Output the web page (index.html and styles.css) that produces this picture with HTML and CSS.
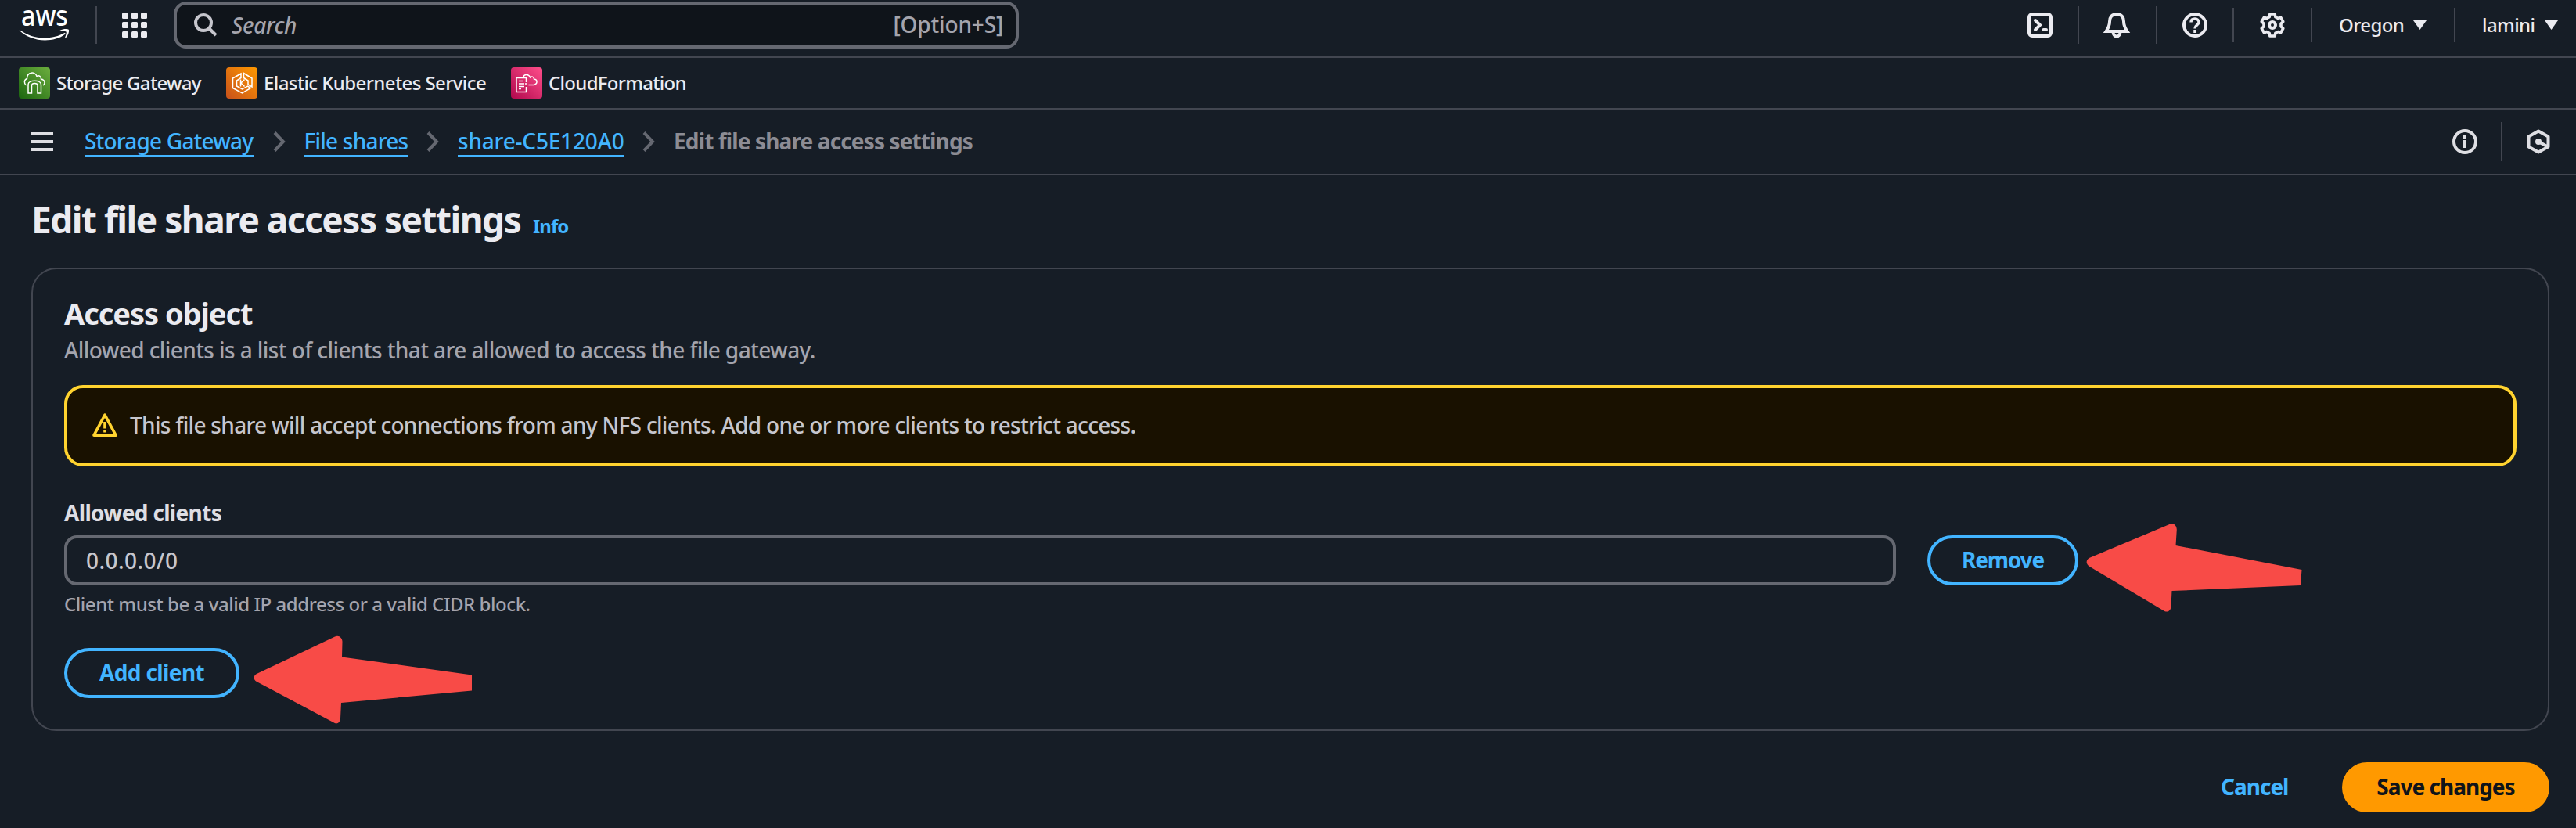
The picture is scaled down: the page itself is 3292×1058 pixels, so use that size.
FILE: index.html
```html
<!DOCTYPE html>
<html lang="en">
<head>
<meta charset="utf-8">
<title>Edit file share access settings</title>
<link rel="stylesheet" href="styles.css">
</head>
<body>
<header class="topbar">
  <svg class="logo" viewBox="0 0 64 44" aria-label="aws">
    <text class="logo-text" x="2" y="23" textLength="60" lengthAdjust="spacingAndGlyphs">aws</text>
    <path d="M0.6 28.4C10 35 20 38.4 31 38.4C41 38.4 50.500 36 57 32.200C58.200 31.600 59.200 33 58.200 33.800C51.500 39 42 41.500 32.500 41.500C20 41.500 8.500 37 0.100 29.300C-.5 28.700.1 28.100.6 28.400Z"/>
    <path d="M51.800 28.800C55 26.800 61.500 26.500 62.700 27.800C64 29.300 62 35.800 58.800 38.600C58.300 39 57.800 38.800 58 38.200C59 35.600 60.300 31.600 59.500 30.500C58.700 29.500 54.800 29.700 52.300 29.900C51.600 30 51.300 29.200 51.800 28.800Z"/>
  </svg>
  <span class="divider logo-divider"></span>
  <svg class="apps" viewBox="0 0 32 32">
    <rect width="8" height="8" rx="1.500"/><rect x="12" width="8" height="8" rx="1.500"/><rect x="24" width="8" height="8" rx="1.500"/>
    <rect y="12" width="8" height="8" rx="1.500"/><rect x="12" y="12" width="8" height="8" rx="1.500"/><rect x="24" y="12" width="8" height="8" rx="1.500"/>
    <rect y="24" width="8" height="8" rx="1.500"/><rect x="12" y="24" width="8" height="8" rx="1.500"/><rect x="24" y="24" width="8" height="8" rx="1.500"/>
  </svg>
  <div class="search">
    <svg class="search-icon" viewBox="0 0 30 30"><circle cx="12" cy="12" r="10"/><path d="M19 19L28 28"/></svg>
    <span class="search-placeholder">Search</span>
    <span class="shortcut">[Option+S]</span>
  </div>
  <nav class="tools">
    <div class="tool tool-shell"><svg class="icon" viewBox="0 0 32 32"><rect x="2" y="2" width="28" height="28" rx="4"/><path stroke-linecap="round" d="M10 10L16 16L10 22M20.500 22H24"/></svg></div>
    <div class="tool tool-bell"><svg class="icon" viewBox="0 0 32 32"><path d="M16 2C9.500 2 7 6.500 7 11.500C7 17.500 4.500 21 2.500 24H29.500C27.500 21 25 17.500 25 11.500C25 6.500 22.500 2 16 2ZM11.500 24.500C11.500 32.500 20.500 32.500 20.500 24.500"/></svg></div>
    <div class="tool tool-help"><svg class="icon" viewBox="0 0 32 32"><circle cx="16" cy="16" r="14"/><path d="M11 12.500C11 9.500 13 8 16 8C19 8 21 9.800 21 12.300C21 16 16 16 16 20.500M16 22V26"/></svg></div>
    <div class="tool"><svg class="icon" viewBox="0 0 32 32"><path stroke-width="3.600" stroke-linejoin="round" d="M12.800 2H19.200L19.800 5.700L23.200 7.500L26.600 6.200L29.800 11.700L27 14.200V17.800L29.800 20.300L26.600 25.800L23.200 24.500L19.800 26.300L19.200 30H12.800L12.200 26.300L8.800 24.500L5.400 25.800L2.200 20.300L5 17.800V14.200L2.200 11.700L5.400 6.200L8.800 7.500L12.200 5.700Z"/><circle cx="16" cy="16" r="4"/></svg></div>
    <div class="tool tool-menu region"><span class="region-name">Oregon</span><svg class="caret" viewBox="0 0 17 12"><path d="M0 0H17L8.500 12Z"/></svg></div>
    <div class="tool tool-menu account"><span class="account-name">lamini</span><svg class="caret" viewBox="0 0 17 12"><path d="M0 0H17L8.500 12Z"/></svg></div>
  </nav>
</header>

<nav class="favorites">
  <a class="favorite fav-storage">
    <svg class="service" viewBox="0 0 40 40">
      <defs><linearGradient id="green" x1="0" y1="1" x2="1" y2="0"><stop offset="0" stop-color="#1b660f"/><stop offset="1" stop-color="#6cae3e"/></linearGradient></defs>
      <rect width="40" height="40" rx="4" fill="url(#green)"/>
      <path d="M9.500 23C6.500 20.500 6.500 16 10.500 14.500C10.500 5.500 21 5 23 11.500C26 9.500 28.500 12 28.500 15C33.500 16 34.500 20.500 31 23M12 33V22C12 15.500 28.500 15.500 28.500 22V33H24V23C24 19.500 16.500 19.500 16.500 23V33Z"/>
    </svg>
    <span>Storage Gateway</span>
  </a>
  <a class="favorite fav-eks">
    <svg class="service" viewBox="0 0 40 40">
      <defs><linearGradient id="orange" x1="0" y1="1" x2="1" y2="0"><stop offset="0" stop-color="#c8511b"/><stop offset="1" stop-color="#f90"/></linearGradient></defs>
      <rect width="40" height="40" rx="4" fill="url(#orange)"/>
      <path d="M19 8L8.500 14V26.500L20.500 33L31.500 26.500L27.500 24L20.500 28L13.500 24V17L19 13.500ZM22.500 7.500L33 14V25L28 22V17L22.500 13.500Z"/>
      <path d="M18.500 15.500V24.500M23.500 15.500L19 20L23.500 24.500"/>
    </svg>
    <span>Elastic Kubernetes Service</span>
  </a>
  <a class="favorite fav-cfn">
    <svg class="service" viewBox="0 0 40 40">
      <defs><linearGradient id="pink" x1="0" y1="1" x2="1" y2="0"><stop offset="0" stop-color="#b0084d"/><stop offset="1" stop-color="#ff4f8b"/></linearGradient></defs>
      <rect width="40" height="40" rx="4" fill="url(#pink)"/>
      <path d="M19.500 19V13.500H7V31.500H19.500V25M10 17.500H15M10 21H17M10 24.500H17M18 21H21M10 27.500H13M22.500 22.500H29C34.500 21 34 15.500 29.500 15C29 11.500 26.500 11.500 24.500 13C23 8.500 17 8.500 16 12"/>
    </svg>
    <span>CloudFormation</span>
  </a>
</nav>

<div class="crumbbar">
  <svg class="menu" viewBox="0 0 28 24"><path d="M0 2H28M0 12H28M0 22H28"/></svg>
  <a class="crumb crumb-service">Storage Gateway</a>
  <svg class="chevron" viewBox="0 0 16 26"><path d="M2 1.500L13 13L2 24.500"/></svg>
  <a class="crumb crumb-list">File shares</a>
  <svg class="chevron" viewBox="0 0 16 26"><path d="M2 1.500L13 13L2 24.500"/></svg>
  <a class="crumb crumb-share">share-C5E120A0</a>
  <svg class="chevron" viewBox="0 0 16 26"><path d="M2 1.500L13 13L2 24.500"/></svg>
  <span class="crumb-current">Edit file share access settings</span>
  <div class="panel-tools">
    <svg class="icon" viewBox="0 0 32 32"><circle cx="16" cy="16" r="14"/><path d="M16 8V12M16 14V24"/></svg>
    <span class="divider"></span>
    <svg class="icon" viewBox="0 0 32 32"><path stroke-linejoin="round" d="M16 2.500L28.500 9.500V22.500L16 29.500L3.500 22.500V9.500ZM16 16L27 22"/><circle class="dot" cx="16" cy="16" r="4"/></svg>
  </div>
</div>

<main>
  <div class="page-title"><h1>Edit file share access settings</h1><a class="info">Info</a></div>
  <section class="card">
    <h2>Access object</h2>
    <p class="description">Allowed clients is a list of clients that are allowed to access the file gateway.</p>
    <div class="alert">
      <svg class="warning" viewBox="0 0 32 32"><path stroke-linejoin="round" d="M16 2.200L30 28.200H2Z"/><path d="M16 11V19.500M16 21V24.500"/></svg>
      <span>This file share will accept connections from any NFS clients. Add one or more clients to restrict access.</span>
    </div>
    <div class="label">Allowed clients</div>
    <div class="client-row">
      <div class="input">0.0.0.0/0</div>
      <div class="button remove">Remove
        <svg class="arrow arrow-remove" viewBox="0 0 276 113"><path d="M5 43.500L107 0.800C112 -1.200 116 3 115.800 8L114.500 28L275.500 59L274 79L109.500 86L108.500 106C108 112 103.500 114.500 98.500 111L4.500 55C-1 51.500 -.5 46 5 43.500Z"/></svg>
      </div>
    </div>
    <div class="hint">Client must be a valid IP address or a valid CIDR block.</div>
    <div class="button add">Add client
      <svg class="arrow arrow-add" viewBox="0 0 280 114"><path d="M4 49L104 1.500C109 -1 113.500 3 113.500 8L113 27.500L279 50.500V70.500L112 86L111 106C110.500 112 106 114 102 111L4 59C-.5 56.500-.5 51.500 4 49Z"/></svg>
    </div>
  </section>
  <footer class="actions">
    <a class="cancel">Cancel</a>
    <div class="button save">Save changes</div>
  </footer>
</main>
</body>
</html>
```
FILE: styles.css
```css
* { box-sizing: border-box; }
body {
  margin: 0;
  height: 1058px;
  overflow: hidden;
  background: #161d26;
  color: #c6c6cd;
  font: 500 28px/40px "Noto Sans", "Open Sans", sans-serif;
  white-space: nowrap;
}
svg { display: block; flex: none; overflow: visible; }
h1, h2, p { margin: 0; }

.divider { width: 2px; height: 48px; background: #424650; }
.icon { width: 32px; height: 32px; fill: none; stroke: #ebebf0; stroke-width: 4; }

/* Global header */
.topbar {
  display: flex;
  align-items: center;
  height: 74px;
  padding: 0 0 8px 25px;
  border-bottom: 2px solid #424650;
}
.logo { width: 64px; height: 44px; fill: #fff; }
.logo-text { font-size: 36px; font-weight: 500; }
.logo-divider { margin-left: 33px; }
.apps { width: 32px; height: 32px; margin-left: 32px; fill: #ebebf0; }
.search {
  display: flex;
  align-items: center;
  width: 1080px;
  height: 60px;
  margin-left: 34px;
  padding: 0 16px 0 22px;
  border: 4px solid #656871;
  border-radius: 16px;
  background: #0f141a;
}
.search-icon { width: 30px; height: 30px; fill: none; stroke: #c6c6cd; stroke-width: 4; }
.search-placeholder { margin-left: 18px; color: #a4a4ad; font-style: italic; letter-spacing: -0.32px; }
.shortcut { margin-left: auto; padding-bottom: 2px; color: #a4a4ad; letter-spacing: -0.16px; }

.tools { display: grid; grid-template-columns: 96px 100px 98px 100px 183px 156px; margin-left: auto; align-items: center; }
.tool { display: flex; align-items: center; justify-content: center; height: 48px; border-left: 2px solid #424650; color: #ebebf0; font-size: 24px; }
.tool-shell { border-left: 0; }
.tool-bell { padding-right: 2px; }
.tool-help ~ .tool { height: 44px; }
.tool-help .icon path { stroke-width: 3.500; }
.tool-menu { justify-content: flex-start; padding-left: 34px; }
.region-name { width: 95px; letter-spacing: -0.6px; }
.account { padding-left: 34px; }
.account-name { width: 80px; letter-spacing: -0.59px; }
.caret { width: 17px; height: 12px; fill: #ebebf0; }

/* Favorite services */
.favorites {
  display: grid;
  grid-template-columns: 265px 364px auto;
  align-items: center;
  height: 66px;
  padding-left: 24px;
  border-bottom: 2px solid #424650;
}
.favorite { display: flex; align-items: center; gap: 8px; color: #ebebf0; font-size: 24px; }
.service { width: 40px; height: 40px; fill: none; stroke: #fff; stroke-width: 1.500; }
.service rect { stroke: none; }
.fav-storage { letter-spacing: -0.66px; }
.fav-eks { letter-spacing: -0.59px; }
.fav-cfn { letter-spacing: -0.7px; }

/* Breadcrumbs */
.crumbbar {
  display: flex;
  align-items: center;
  height: 84px;
  padding-left: 40px;
  border-bottom: 2px solid #424650;
}
.menu { width: 28px; height: 24px; margin-right: 40px; stroke: #dedee3; stroke-width: 4; }
.crumb { height: 38px; line-height: 36px; border-bottom: 2px solid #42b4ff; color: #42b4ff; }
.crumb-service { width: 216px; letter-spacing: -0.8px; }
.crumb-list { width: 132px; letter-spacing: -0.78px; }
.crumb-share { width: 211.500px; letter-spacing: -0.2px; }
.chevron { width: 16px; height: 26px; margin: 0 24px 0 24.500px; fill: none; stroke: #656871; stroke-width: 4; }
.crumb-current { padding-bottom: 2px; color: #8c8c94; font-weight: 700; letter-spacing: -0.87px; }
.panel-tools { display: flex; align-items: center; margin: 0 32px 0 auto; }
.panel-tools .icon { stroke: #dedee3; }
.panel-tools .divider { height: 50px; margin: 0 30px; }
.dot { fill: #dedee3; stroke: none; }

/* Page */
main { padding: 28px 34px 0 40px; }
.page-title { display: flex; align-items: baseline; height: 56px; }
h1 { width: 641px; color: #ebebf0; font-size: 46px; font-weight: 700; line-height: 56px; letter-spacing: -1.5px; }
.info { color: #42b4ff; font-size: 24px; font-weight: 700; letter-spacing: -1px; }
.card { height: 592px; margin-top: 34px; padding: 32px 40px; border: 2px solid #424650; border-radius: 32px; }
h2 { color: #ebebf0; font-size: 38px; font-weight: 700; line-height: 48px; letter-spacing: -1.05px; }
.description { margin-top: 3px; color: #a4a4ad; letter-spacing: -0.586px; }
.alert {
  display: flex;
  align-items: center;
  gap: 16px;
  height: 104px;
  margin-top: 25px;
  padding-left: 32px;
  border: 4px solid #ffd32f;
  border-radius: 24px;
  background: #191100;
  letter-spacing: -0.684px;
}
.alert span { padding-bottom: 2px; }
.warning { width: 32px; height: 32px; fill: none; stroke: #ffd32f; stroke-width: 3.600; }
.label { margin-top: 39px; color: #dedee3; font-weight: 700; letter-spacing: -0.66px; }
.client-row { display: flex; gap: 40px; margin-top: 9px; }
.input {
  display: flex;
  align-items: center;
  width: 2341px;
  height: 64px;
  padding-left: 24px;
  border: 4px solid #656871;
  border-radius: 16px;
  letter-spacing: 0.42px;
}
.hint { margin-top: 8px; color: #a4a4ad; font-size: 24px; line-height: 32px; letter-spacing: -0.442px; }
.button {
  position: relative;
  display: flex;
  align-items: center;
  justify-content: center;
  height: 64px;
  padding-bottom: 2px;
  border: 4px solid #42b4ff;
  border-radius: 32px;
  color: #42b4ff;
  font-weight: 700;
}
.remove { width: 193px; letter-spacing: -1.2px; }
.add { width: 224px; margin-top: 40px; letter-spacing: -0.62px; }
.arrow { position: absolute; fill: #f84b47; }
.arrow-remove { left: 199px; top: -19px; width: 276px; height: 113px; }
.arrow-add { left: 238px; top: -20px; width: 280px; height: 114px; }
.actions { display: flex; align-items: center; justify-content: flex-end; margin-top: 40px; }
.cancel { width: 155px; padding-bottom: 2px; color: #42b4ff; font-weight: 700; letter-spacing: -1px; }
.save { width: 265px; border-color: #f90; background: #f90; color: #0f141a; letter-spacing: -1px; }
```
